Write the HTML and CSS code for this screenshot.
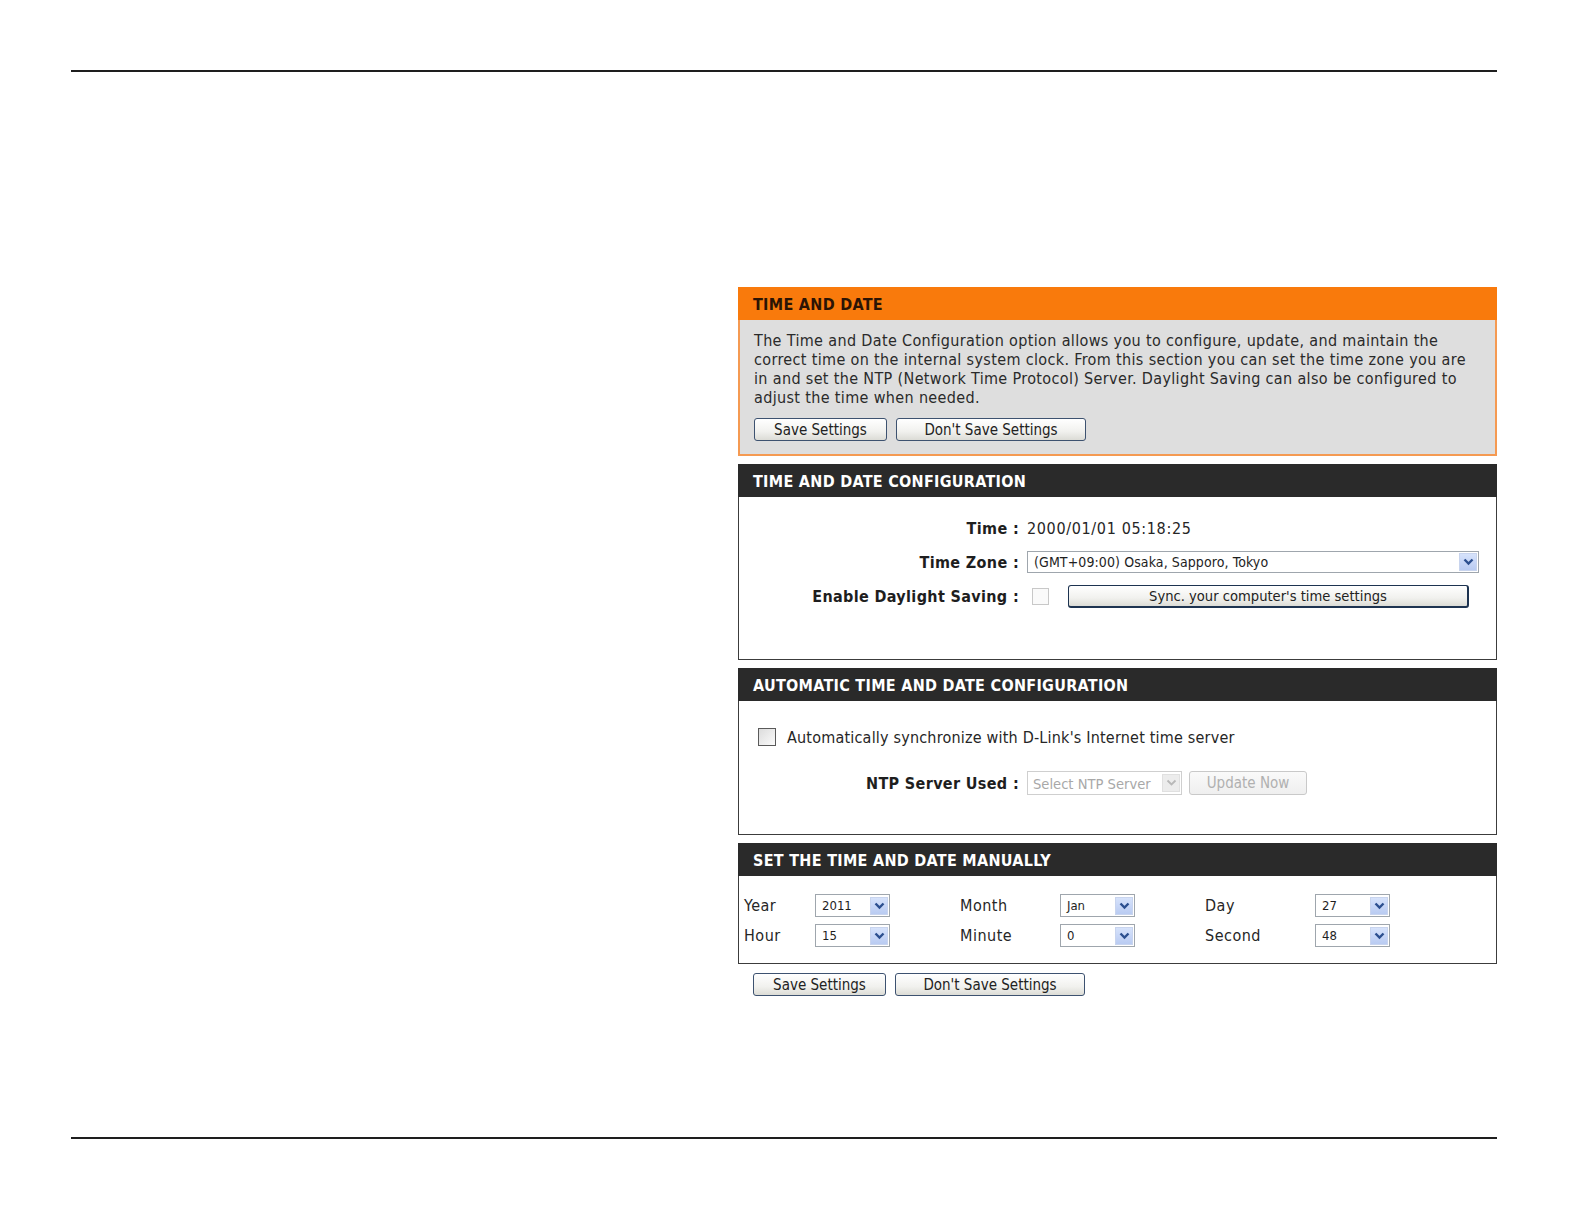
FILE: index.html
```html
<!DOCTYPE html>
<html>
<head>
<meta charset="utf-8">
<title>Time and Date</title>
<link rel="stylesheet" href="styles.css">
</head>
<body>
<div class="rule rule-top"></div>
<div class="panel">
  <section class="box intro">
    <h2 class="hd hd-orange">TIME AND DATE</h2>
    <div class="intro-body">
      <p class="desc">The Time and Date Configuration option allows you to configure, update, and maintain the correct time on the internal system clock. From this section you can set the time zone you are in and set the NTP (Network Time Protocol) Server. Daylight Saving can also be configured to adjust the time when needed.</p>
      <div class="btns">
        <span class="btn b-save">Save Settings</span>
        <span class="btn b-dont">Don't Save Settings</span>
      </div>
    </div>
  </section>

  <section class="box dark cfg">
    <h2 class="hd">TIME AND DATE CONFIGURATION</h2>
    <div class="body cfg-body">
      <div class="frow"><span class="lbl">Time :</span><span class="val">2000/01/01 05:18:25</span></div>
      <div class="frow"><span class="lbl">Time Zone :</span>
        <span class="sel sel-tz"><span class="sel-txt">(GMT+09:00) Osaka, Sapporo, Tokyo</span><span class="arr"><svg width="11" height="8" viewBox="0 0 11 8"><polyline points="1.5,1.5 5.5,5.5 9.5,1.5" fill="none" stroke="#2c4f8f" stroke-width="2.4"/></svg></span></span>
      </div>
      <div class="frow"><span class="lbl">Enable Daylight Saving :</span>
        <span class="chk chk-dis"></span>
        <span class="btn b-sync">Sync. your computer's time settings</span>
      </div>
    </div>
  </section>

  <section class="box dark auto">
    <h2 class="hd">AUTOMATIC TIME AND DATE CONFIGURATION</h2>
    <div class="body auto-body">
      <div class="auto-chk"><span class="chk"></span><span class="auto-txt">Automatically synchronize with D-Link's Internet time server</span></div>
      <div class="frow ntp"><span class="lbl">NTP Server Used :</span>
        <span class="sel sel-ntp"><span class="sel-txt">Select NTP Server</span><span class="arr arr-dis"><svg width="11" height="8" viewBox="0 0 11 8"><polyline points="1.5,1.5 5.5,5.5 9.5,1.5" fill="none" stroke="#b8b8b8" stroke-width="1.8"/></svg></span></span>
        <span class="btn btn-dis b-upd">Update Now</span>
      </div>
    </div>
  </section>

  <section class="box dark man">
    <h2 class="hd">SET THE TIME AND DATE MANUALLY</h2>
    <div class="body man-body">
      <span class="mlbl">Year</span><span class="sel sel-sm"><span class="sel-txt">2011</span><span class="arr"><svg width="11" height="8" viewBox="0 0 11 8"><polyline points="1.5,1.5 5.5,5.5 9.5,1.5" fill="none" stroke="#2c4f8f" stroke-width="2.4"/></svg></span></span>
      <span class="mlbl">Month</span><span class="sel sel-sm"><span class="sel-txt">Jan</span><span class="arr"><svg width="11" height="8" viewBox="0 0 11 8"><polyline points="1.5,1.5 5.5,5.5 9.5,1.5" fill="none" stroke="#2c4f8f" stroke-width="2.4"/></svg></span></span>
      <span class="mlbl">Day</span><span class="sel sel-sm"><span class="sel-txt">27</span><span class="arr"><svg width="11" height="8" viewBox="0 0 11 8"><polyline points="1.5,1.5 5.5,5.5 9.5,1.5" fill="none" stroke="#2c4f8f" stroke-width="2.4"/></svg></span></span>
      <span class="mlbl">Hour</span><span class="sel sel-sm"><span class="sel-txt">15</span><span class="arr"><svg width="11" height="8" viewBox="0 0 11 8"><polyline points="1.5,1.5 5.5,5.5 9.5,1.5" fill="none" stroke="#2c4f8f" stroke-width="2.4"/></svg></span></span>
      <span class="mlbl">Minute</span><span class="sel sel-sm"><span class="sel-txt">0</span><span class="arr"><svg width="11" height="8" viewBox="0 0 11 8"><polyline points="1.5,1.5 5.5,5.5 9.5,1.5" fill="none" stroke="#2c4f8f" stroke-width="2.4"/></svg></span></span>
      <span class="mlbl">Second</span><span class="sel sel-sm"><span class="sel-txt">48</span><span class="arr"><svg width="11" height="8" viewBox="0 0 11 8"><polyline points="1.5,1.5 5.5,5.5 9.5,1.5" fill="none" stroke="#2c4f8f" stroke-width="2.4"/></svg></span></span>
    </div>
  </section>

  <div class="btns btns-bottom">
    <span class="btn b-save">Save Settings</span>
    <span class="btn b-dont">Don't Save Settings</span>
  </div>
</div>
<div class="rule rule-bottom"></div>
</body>
</html>
```

FILE: styles.css
```css
* { box-sizing: border-box; }
html, body { margin: 0; padding: 0; background: #fff; }
body {
  font-family: "DejaVu Sans Condensed", "DejaVu Sans", sans-serif;
  color: #262626;
  font-size: 16px;
  letter-spacing: 0.3px;
  padding-top: 70px;
  padding-bottom: 20px;
}
.rule { height: 2px; background: #1e1e1e; margin-left: 71px; width: 1426px; }
.rule-bottom { margin-top: 141px; }

.panel { margin-left: 738px; width: 759px; margin-top: 215px; }

.box { margin: 0 0 8px 0; }
.hd {
  margin: 0;
  height: 33px;
  line-height: 35px;
  padding-left: 15px;
  font-size: 16px;
  font-weight: bold;
  letter-spacing: 0.3px;
  color: #fff;
  background: #2a2a2a;
}
.hd-orange { background: #f97a0c; color: #2b1405; }

.intro-body {
  background: #dedede;
  border: 2px solid #f59a52;
  border-top: none;
  padding: 11px 14px 13px 14px;
}
.desc { margin: 0; line-height: 19px; font-size: 16px; color: #2a2a2a; letter-spacing: 0.35px; }
.btns { display: flex; gap: 9px; margin-top: 11px; }
.btn {
  display: inline-flex; align-items: center; justify-content: center;
  height: 23px;
  font-size: 15px;
  letter-spacing: 0;
  color: #222;
  border: 1px solid #3d5270;
  border-radius: 3px;
  background: linear-gradient(#ffffff, #f1f1ee 60%, #dcdcd6);
}
.b-save { width: 133px; }
.b-dont { width: 190px; }
.btns-bottom { margin-top: 9px; padding-left: 15px; }

.body { background: #fff; border: 1px solid #3c3c3c; border-top: none; }

.cfg-body { height: 163px; padding-top: 14px; }
.frow { display: flex; align-items: center; height: 34px; }
.lbl {
  width: 280px; text-align: right; font-weight: bold; font-size: 16px;
  color: #1e1e1e; margin-right: 8px; white-space: nowrap; letter-spacing: 0.35px;
}
.val { font-size: 16px; color: #262626; letter-spacing: 0.65px; }

.sel {
  display: inline-flex; align-items: center; justify-content: space-between;
  height: 23px; border: 1px solid #9fa6ad; background: #fff;
  padding: 0 1px 0 6px;
}
.sel-txt { font-size: 13px; color: #1e1e1e; letter-spacing: 0; }
.arr {
  width: 18px; height: 18px; display: flex; align-items: center; justify-content: center;
  background: linear-gradient(#d6e2fb, #b9cbf2);
  border: 1px solid #c8d4ee;
}
.sel-tz { width: 452px; height: 22px; }
.sel-tz .sel-txt { font-size: 14px; letter-spacing: 0.1px; }

.chk {
  display: inline-block; width: 18px; height: 18px;
  border: 1px solid #5a5a5a;
  background: linear-gradient(135deg, #dcdcdc, #fbfbfb);
}
.chk-dis { border-color: #c8c8c8; background: #fafafa; width: 17px; height: 17px; margin-left: 5px; }
.b-sync {
  width: 401px; height: 23px; margin-left: 19px;
  border: 1px solid #1d3350; border-right-width: 2px; border-bottom-width: 2px;
  font-size: 14.6px;
}

.auto-body { height: 134px; padding-top: 27px; padding-left: 19px; }
.auto-chk { display: flex; align-items: center; height: 18px; }
.auto-txt { margin-left: 11px; font-size: 16px; color: #262626; letter-spacing: 0.2px; }
.ntp { margin-top: 23px; margin-left: -19px; height: 28px; }
.sel-ntp { width: 155px; height: 24px; border-color: #cfcfcf; padding-left: 5px; }
.sel-ntp .sel-txt { color: #a8a8a8; font-size: 14.6px; }
.arr-dis { background: #ececec; border-color: #e0e0e0; }
.btn-dis { color: #b0b0b0; border-color: #c9c9c9; background: linear-gradient(#fafafa, #efefef); }
.b-upd { width: 118px; height: 24px; margin-left: 7px; font-size: 15px; }

.man-body {
  height: 88px;
  padding: 18px 0 0 5px;
  display: grid;
  grid-template-columns: 71px 145px 100px 145px 110px 75px;
  grid-auto-rows: 23px;
  row-gap: 7px;
  align-items: center;
}
.mlbl { font-size: 16px; color: #262626; letter-spacing: 0.5px; }
.sel-sm { width: 75px; height: 23px; }
```
